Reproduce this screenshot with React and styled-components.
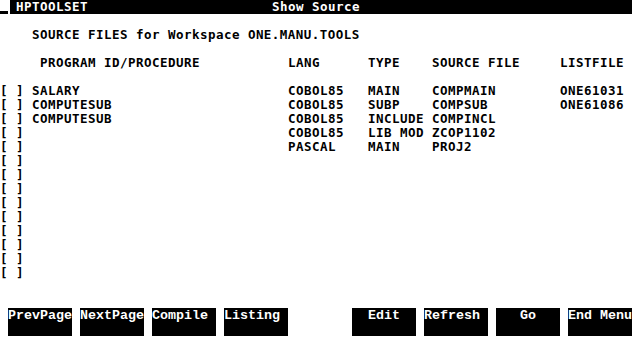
import React from 'react';
import styled, { createGlobalStyle } from 'styled-components';

const CH = 8;
const LINE = 14;

const GlobalStyle = createGlobalStyle`
  html, body {
    margin: 0;
    padding: 0;
    background: #fff;
  }
`;

const Screen = styled.div`
  width: 640px;
  height: 350px;
  overflow: hidden;
  display: flex;
  flex-direction: column;
  background: #fff;
  color: #000;
  font-family: 'DejaVu Sans Mono', 'Liberation Mono', monospace;
  font-weight: bold;
  font-size: 12.5px;
  letter-spacing: 0.47px;
  white-space: pre;
`;

const Line = styled.div`
  display: flex;
  height: ${({ $lines = 1 }) => $lines * LINE}px;
  line-height: ${LINE}px;
  padding-left: ${({ $indent = 0 }) => $indent * CH}px;
  flex-shrink: 0;
`;

const Field = styled.span`
  width: ${({ $w }) => $w * CH}px;
  flex-shrink: 0;
  overflow: hidden;
`;

const Cursor = styled.span`
  width: ${CH}px;
  height: 3px;
  margin-top: 11px;
  margin-right: 2px;
  background: #000;
  flex-shrink: 0;
`;

const TitleBar = styled.div`
  display: flex;
  width: 622px;
  height: ${LINE}px;
  padding-left: 6px;
  box-sizing: border-box;
  background: #000;
  color: #fff;
`;

const Keys = styled.div`
  display: flex;
  height: ${LINE * 2}px;
  padding-left: ${CH}px;
  gap: ${CH}px;
  flex-shrink: 0;
`;

const Key = styled.div`
  width: ${CH * 8}px;
  height: ${LINE * 2}px;
  margin-left: ${({ $skip = 0 }) => $skip}px;
  background: #000;
  color: #fff;
  font-family: 'Liberation Mono', 'Courier New', monospace;
  font-weight: bold;
  font-size: 13.33px;
  letter-spacing: 0;
  line-height: ${LINE + 1}px;
  white-space: pre;
  overflow: hidden;
`;

const rows = [
  { name: 'SALARY', lang: 'COBOL85', type: 'MAIN', src: 'COMPMAIN', list: 'ONE61031' },
  { name: 'COMPUTESUB', lang: 'COBOL85', type: 'SUBP', src: 'COMPSUB', list: 'ONE61086' },
  { name: 'COMPUTESUB', lang: 'COBOL85', type: 'INCLUDE', src: 'COMPINCL' },
  { lang: 'COBOL85', type: 'LIB MOD', src: 'ZCOP1102' },
  { lang: 'PASCAL', type: 'MAIN', src: 'PROJ2' },
  ...Array.from({ length: 9 }, () => ({})),
];

const keys = [
  { label: 'PrevPage' },
  { label: 'NextPage' },
  { label: 'Compile' },
  { label: 'Listing' },
  { label: '  Edit', skip: CH * 7 },
  { label: 'Refresh' },
  { label: '   Go' },
  { label: 'End Menu' },
];

export default function App() {
  return (
    <>
      <GlobalStyle />
      <Screen>
        <Line>
          <Cursor />
          <TitleBar>
            <Field $w={32}>HPTOOLSET</Field>
            <Field $w={12}>Show Source</Field>
          </TitleBar>
        </Line>
        <Line />
        <Line $indent={4}>SOURCE FILES for Workspace ONE.MANU.TOOLS</Line>
        <Line />
        <Line $indent={5}>
          <Field $w={31}>PROGRAM ID/PROCEDURE</Field>
          <Field $w={10}>LANG</Field>
          <Field $w={8}>TYPE</Field>
          <Field $w={16}>SOURCE FILE</Field>
          <Field $w={10}>LISTFILE</Field>
        </Line>
        <Line />
        {rows.map((r, i) => (
          <Line key={i}>
            <Field $w={4}>[ ]</Field>
            <Field $w={32}>{r.name || ''}</Field>
            <Field $w={10}>{r.lang || ''}</Field>
            <Field $w={8}>{r.type || ''}</Field>
            <Field $w={16}>{r.src || ''}</Field>
            <Field $w={10}>{r.list || ''}</Field>
          </Line>
        ))}
        <Line $lines={2} />
        <Keys>
          {keys.map((k) => (
            <Key key={k.label} $skip={k.skip}>{k.label}</Key>
          ))}
        </Keys>
      </Screen>
    </>
  );
}
